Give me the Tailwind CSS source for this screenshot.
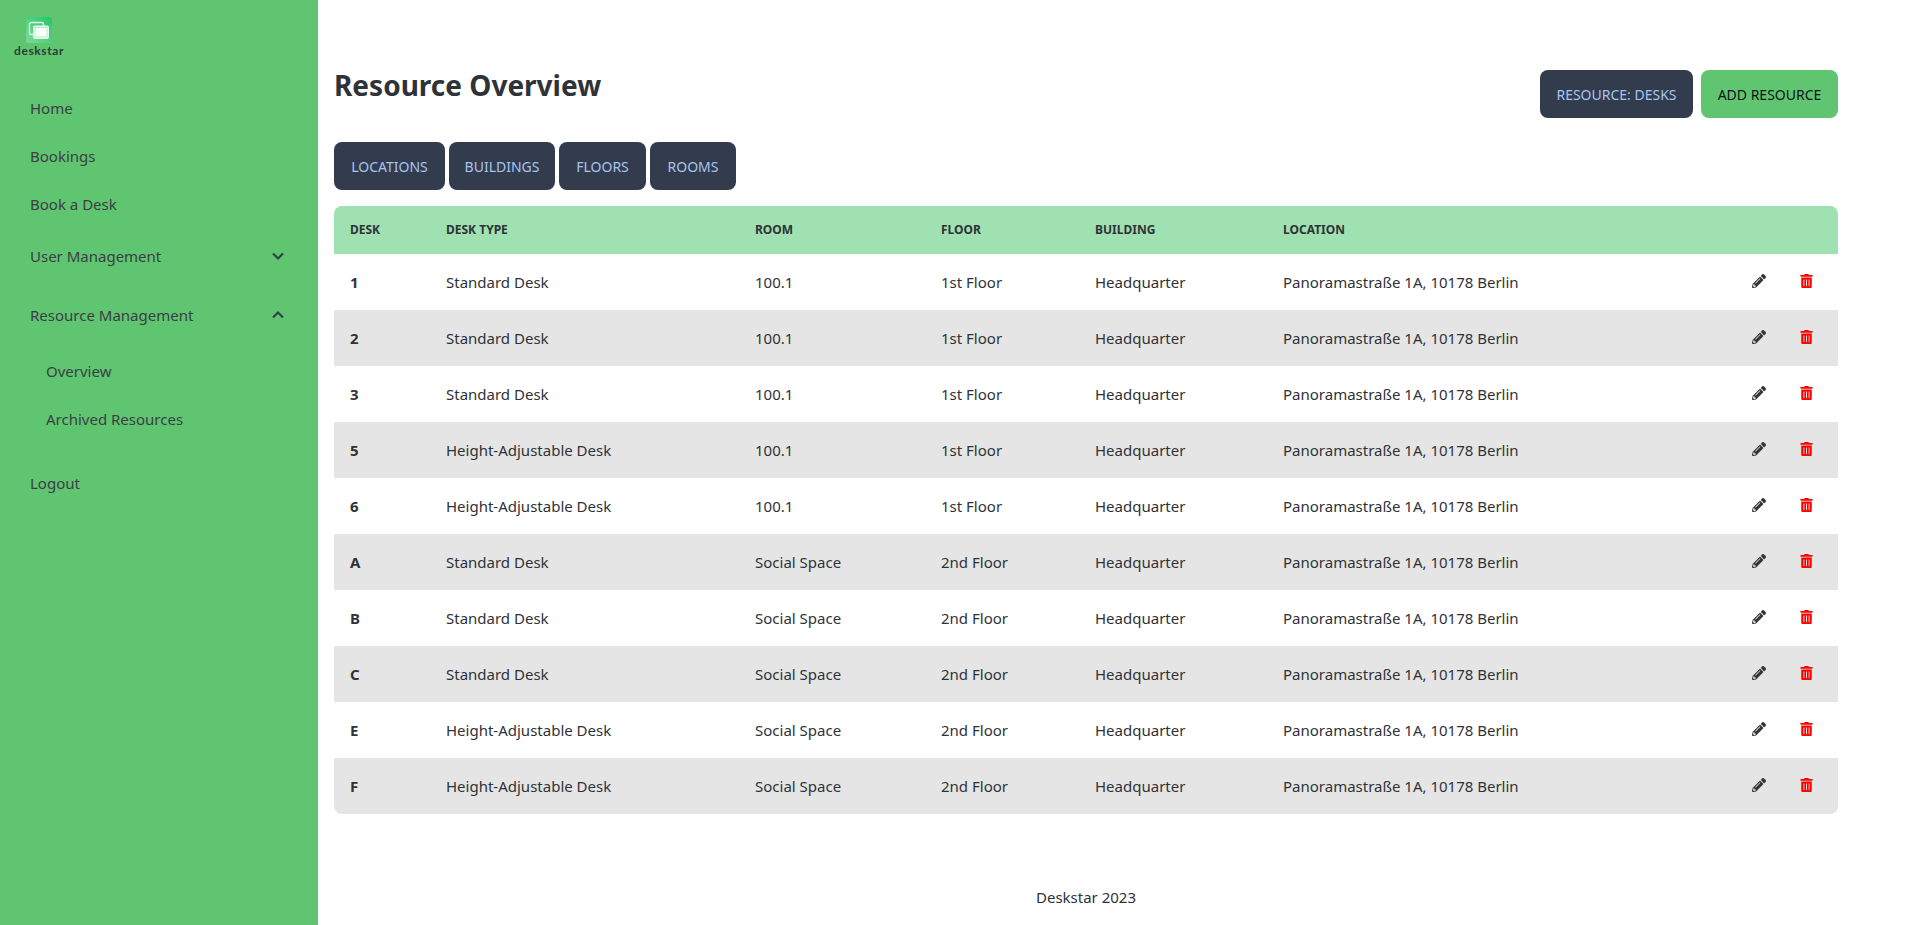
<!DOCTYPE html>
<html lang="en">
<head>
  <meta charset="UTF-8" />
  <title>Deskstar | Resource Overview</title>
  <script src="https://cdn.jsdelivr.net/npm/@tailwindcss/browser@4"></script>
</head>
<body class="bg-white text-[#333c4d] font-['Noto_Sans',sans-serif] text-[15px]">
  <div class="flex h-[925px] overflow-hidden">

    <!-- sidebar -->
    <aside class="w-[318px] shrink-0 bg-[#60c570] text-[#3a3f46]">
      <div class="w-[78px] pt-[17px] flex flex-col items-center">
        <svg width="26" height="26" viewBox="0 0 26 26">
          <defs>
            <linearGradient id="logo" x1="0" y1="1" x2="1" y2="0">
              <stop offset="0" stop-color="#7bdc95" />
              <stop offset="1" stop-color="#22c768" />
            </linearGradient>
          </defs>
          <rect width="26" height="26" rx="3" fill="url(#logo)" />
          <rect x="3.5" y="5.5" width="14" height="12" rx="1.5" fill="none" stroke="#e8f8ec" stroke-width="1.3" />
          <rect x="7.5" y="9" width="15" height="12.5" rx="1" fill="#fff" stroke="#e8f8ec" stroke-width="1" />
          <rect x="9" y="10.5" width="12" height="9.5" fill="#ffffff" stroke="#7bdc95" stroke-width="0.6" />
        </svg>
        <div class="font-['Lato',sans-serif] font-bold text-[12px] leading-[14px] tracking-[0.6px] text-[#2f3a38] mt-[1px]">deskstar</div>
      </div>

      <nav class="mt-[26px] pl-[30px] pr-[30px]">
        <a class="flex items-center h-[48px]">Home</a>
        <a class="flex items-center h-[48px]">Bookings</a>
        <a class="flex items-center h-[48px]">Book a Desk</a>
        <a class="flex items-center justify-between h-[48px] mt-[4px] pr-[3px]">
          User Management
          <svg width="14" height="14" viewBox="0 0 14 14" fill="none" stroke="currentColor" stroke-width="2.2"><path d="M2 4.5l5 5 5-5" /></svg>
        </a>
        <a class="flex items-center justify-between h-[48px] mt-[11px] pr-[3px]">
          Resource Management
          <svg width="14" height="14" viewBox="0 0 14 14" fill="none" stroke="currentColor" stroke-width="2.2"><path d="M2 9.5l5-5 5 5" /></svg>
        </a>
        <div class="pl-[16px] mt-[8px]">
          <a class="flex items-center h-[48px]">Overview</a>
          <a class="flex items-center h-[48px]">Archived Resources</a>
        </div>
        <a class="flex items-center h-[48px] mt-[16px]">Logout</a>
      </nav>
    </aside>

    <!-- main -->
    <main class="flex-1 pl-[16px] pr-[77px] pt-[70px] flex flex-col">
      <div class="flex justify-between items-start h-[48px]">
        <h1 class="text-[28px] leading-[30px] font-bold text-[#2f3338]">Resource Overview</h1>
        <div class="flex gap-[8px]">
          <button class="h-[48px] w-[153px] rounded-lg bg-[#333c4d] text-[#a6c4f0] text-[14px]">RESOURCE: DESKS</button>
          <button class="h-[48px] w-[137px] rounded-lg bg-[#60c570] text-[#10141a] text-[14px]">ADD RESOURCE</button>
        </div>
      </div>

      <div class="flex gap-[4px] mt-[24px]">
        <button class="h-[48px] w-[111px] rounded-lg bg-[#333c4d] text-[#a6c4f0] text-[14px]">LOCATIONS</button>
        <button class="h-[48px] w-[106px] rounded-lg bg-[#333c4d] text-[#a6c4f0] text-[14px]">BUILDINGS</button>
        <button class="h-[48px] w-[87px] rounded-lg bg-[#333c4d] text-[#a6c4f0] text-[14px]">FLOORS</button>
        <button class="h-[48px] w-[86px] rounded-lg bg-[#333c4d] text-[#a6c4f0] text-[14px]">ROOMS</button>
      </div>

      <table class="w-[1504px] table-fixed mt-[16px] border-separate border-spacing-0">
        <thead>
          <tr class="h-[48px] text-[12px] font-bold text-[#2f3338] text-left">
            <th class="w-[96px] pl-[16px] bg-[#9fe1b0] rounded-tl-lg font-bold">DESK</th>
            <th class="w-[324px] pl-[16px] bg-[#9fe1b0] font-bold">DESK TYPE</th>
            <th class="w-[187px] pl-[1px] bg-[#9fe1b0] font-bold">ROOM</th>
            <th class="w-[154px] bg-[#9fe1b0] font-bold">FLOOR</th>
            <th class="w-[188px] bg-[#9fe1b0] font-bold">BUILDING</th>
            <th class="w-[433px] bg-[#9fe1b0] font-bold">LOCATION</th>
            <th class="bg-[#9fe1b0] rounded-tr-lg"></th>
          </tr>
        </thead>
        <tbody id="rows"></tbody>
      </table>

      <footer class="mt-[72px] w-[1504px] text-center text-[#2f3338]">Deskstar 2023</footer>
    </main>
  </div>

  <script>
    const desks = [
      ["1", "Standard Desk", "100.1", "1st Floor"],
      ["2", "Standard Desk", "100.1", "1st Floor"],
      ["3", "Standard Desk", "100.1", "1st Floor"],
      ["5", "Height-Adjustable Desk", "100.1", "1st Floor"],
      ["6", "Height-Adjustable Desk", "100.1", "1st Floor"],
      ["A", "Standard Desk", "Social Space", "2nd Floor"],
      ["B", "Standard Desk", "Social Space", "2nd Floor"],
      ["C", "Standard Desk", "Social Space", "2nd Floor"],
      ["E", "Height-Adjustable Desk", "Social Space", "2nd Floor"],
      ["F", "Height-Adjustable Desk", "Social Space", "2nd Floor"],
    ];

    const pencil = `<svg class="w-[14px] h-[14px]" viewBox="0 0 512 512" fill="#33363b"><path d="M497.9 142.1l-46.1 46.1c-4.7 4.7-12.3 4.7-17 0l-111-111c-4.7-4.7-4.7-12.3 0-17l46.1-46.1c18.7-18.7 49.1-18.7 67.9 0l60.1 60.1c18.8 18.7 18.8 49.1 0 67.9zM284.2 99.8L21.6 362.4.4 483.9c-2.9 16.4 11.4 30.6 27.8 27.8l121.5-21.3 262.6-262.6c4.7-4.7 4.7-12.3 0-17l-111-111c-4.8-4.7-12.4-4.7-17.1 0zM124.1 339.9c-5.5-5.5-5.5-14.3 0-19.8l154-154c5.5-5.5 14.3-5.5 19.8 0s5.5 14.3 0 19.8l-154 154c-5.5 5.5-14.3 5.5-19.8 0zM88 424h48v36.3l-64.5 11.3-31.1-31.1L51.7 376H88v48z"/></svg>`;
    const trash = `<svg class="w-[13px] h-[14px]" viewBox="0 0 448 512" fill="#ff0000"><path d="M32 464a48 48 0 0 0 48 48h288a48 48 0 0 0 48-48V128H32zm272-256a16 16 0 0 1 32 0v224a16 16 0 0 1-32 0zm-96 0a16 16 0 0 1 32 0v224a16 16 0 0 1-32 0zm-96 0a16 16 0 0 1 32 0v224a16 16 0 0 1-32 0zM432 32H312l-9.4-18.7A24 24 0 0 0 281.1 0H166.8a23.72 23.72 0 0 0-21.4 13.3L136 32H16A16 16 0 0 0 0 48v32a16 16 0 0 0 16 16h416a16 16 0 0 0 16-16V48a16 16 0 0 0-16-16z"/></svg>`;

    document.getElementById("rows").innerHTML = desks.map((d, i) => {
      const bg = i % 2 ? "bg-[#e5e5e5]" : "bg-white";
      const last = i === desks.length - 1;
      return `<tr class="h-[56px] text-[#2f3338]">
        <td class="pl-[16px] font-bold ${bg} ${last ? "rounded-bl-lg" : ""}">${d[0]}</td>
        <td class="pl-[16px] ${bg}">${d[1]}</td>
        <td class="pl-[1px] ${bg}">${d[2]}</td>
        <td class="${bg}">${d[3]}</td>
        <td class="${bg}">Headquarter</td>
        <td class="${bg}">Panoramastraße 1A, 10178 Berlin</td>
        <td class="${bg} ${last ? "rounded-br-lg" : ""}">
          <div class="flex justify-end items-center gap-[34px] pr-[25px] -mt-[2px]">${pencil}${trash}</div>
        </td>
      </tr>`;
    }).join("");
  </script>
</body>
</html>
